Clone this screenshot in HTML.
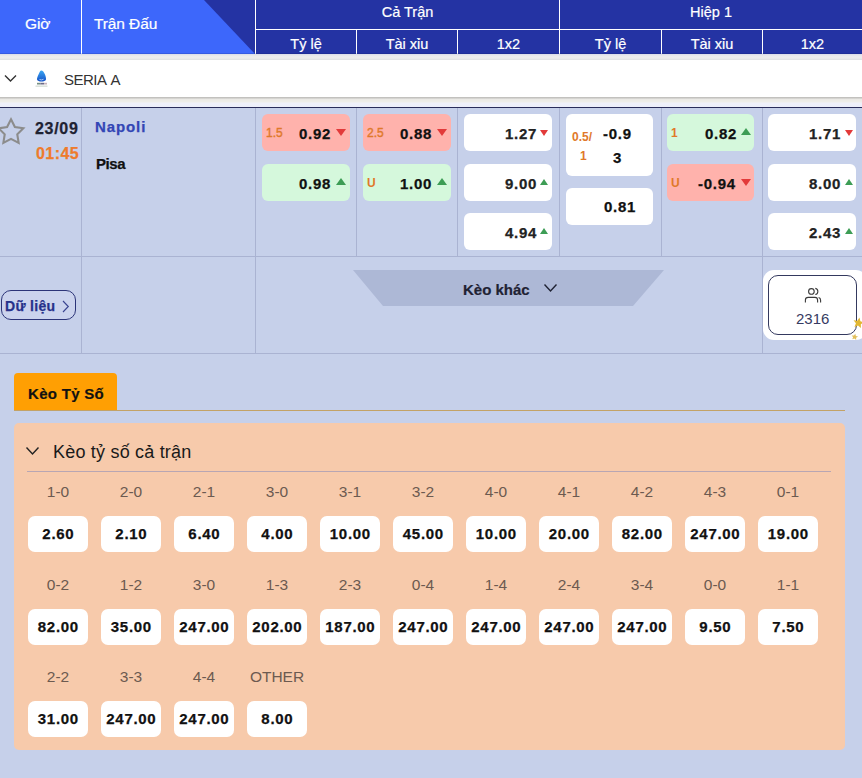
<!DOCTYPE html>
<html><head><meta charset="utf-8">
<style>
*{box-sizing:border-box;margin:0;padding:0}
html,body{width:862px;height:778px;overflow:hidden;background:#c6d0ea;font-family:"Liberation Sans",sans-serif;position:relative}
.a{position:absolute}
.hdr{left:0;top:0;width:862px;height:54px;background:#2433a3}
.hl{left:0;top:0;width:255px;height:54px;background:#3d67fb;clip-path:polygon(0 0,204px 0,255px 54px,0 54px)}
.wv{background:#fff;width:1px}
.wh{background:#fff;height:1px}
.ht{color:#fff;font-size:14.5px;line-height:16px;white-space:nowrap;text-align:center;-webkit-text-stroke:0.2px #fff}
.lg{left:0;top:54px;width:862px;height:6px;background:linear-gradient(#d9dbe9 0,#ebebec 2px,#ececec 4px,#dfe0e1 6px)}
.lrow{left:0;top:60px;width:862px;height:37px;background:#fff}
.shadow{left:0;top:97px;width:862px;height:10px;background:linear-gradient(#c2c1be 0,#c2c1be 1px,#e9e8e4 2px,#efeee9 5px,#eff0fa 6px,#eceefa 10px)}
.navy{left:0;top:107px;width:862px;height:1px;background:#292c5a}
.bv{background:#aab3d2;width:1px}
.bh{background:#aab3d2;height:1px}
.box{width:88px;height:37px;border-radius:6px;background:#fff}
.red{background:#ffb2ac}
.grn{background:#d5f8dc}
.num{font-weight:bold;font-size:15px;color:#111;letter-spacing:0.75px;white-space:nowrap;line-height:16px;-webkit-text-stroke:0.25px currentColor}
.lbl{font-weight:bold;font-size:12px;color:#e0792a;white-space:nowrap;line-height:14px}
.lbn{font-weight:normal;-webkit-text-stroke:0.4px #e0792a}
.up{width:0;height:0;border-left:5px solid transparent;border-right:5px solid transparent;border-bottom:7px solid #3d9d55}
.dn{width:0;height:0;border-left:5px solid transparent;border-right:5px solid transparent;border-top:7px solid #e23a3a}
.ups{width:0;height:0;border-left:4px solid transparent;border-right:4px solid transparent;border-bottom:6px solid #3d9d55}
.dns{width:0;height:0;border-left:4px solid transparent;border-right:4px solid transparent;border-top:6px solid #e23a3a}
.sl{font-size:15.5px;color:#6c5a50;text-align:center;width:60px;line-height:16px;white-space:nowrap}
.sb{width:60px;height:36px;border-radius:7px;background:#fff;font-weight:bold;font-size:15px;letter-spacing:0.7px;text-indent:0.7px;color:#111;text-align:center;line-height:36px;white-space:nowrap;-webkit-text-stroke:0.25px currentColor}
</style></head><body>
<!-- header -->
<div class="a hdr"></div>
<div class="a hl"></div>
<div class="a wv" style="left:81px;top:0;height:54px"></div>
<div class="a wv" style="left:255px;top:0;height:54px"></div>
<div class="a wh" style="left:255px;top:29px;width:607px"></div>
<div class="a wv" style="left:356px;top:29px;height:25px"></div>
<div class="a wv" style="left:457px;top:29px;height:25px"></div>
<div class="a wv" style="left:559px;top:0;height:54px"></div>
<div class="a wv" style="left:661px;top:29px;height:25px"></div>
<div class="a wv" style="left:762px;top:29px;height:25px"></div>
<div class="a ht" style="left:25px;top:16px;font-size:15.5px;letter-spacing:-0.1px">Giờ</div>
<div class="a ht" style="left:94px;top:16px;font-size:15.5px;letter-spacing:-0.1px">Trận Đấu</div>
<div class="a ht" style="left:256px;top:4px;width:303px">Cả Trận</div>
<div class="a ht" style="left:560px;top:4px;width:302px">Hiệp 1</div>
<div class="a ht" style="left:256px;top:36px;width:100px">Tỷ lệ</div>
<div class="a ht" style="left:357px;top:36px;width:100px">Tài xỉu</div>
<div class="a ht" style="left:458px;top:36px;width:101px">1x2</div>
<div class="a ht" style="left:560px;top:36px;width:101px">Tỷ lệ</div>
<div class="a ht" style="left:662px;top:36px;width:100px">Tài xỉu</div>
<div class="a ht" style="left:763px;top:36px;width:99px">1x2</div>

<div class="a" style="left:0;top:53px;width:862px;height:1px;background:rgba(10,20,90,0.15)"></div>
<!-- league row -->
<div class="a lg"></div>
<div class="a lrow"></div>
<svg class="a" style="left:4px;top:74px" width="13" height="9" viewBox="0 0 13 9"><path d="M1 1.5 L6.5 7 L12 1.5" fill="none" stroke="#333" stroke-width="1.4"/></svg>
<svg class="a" style="left:32px;top:68px" width="18" height="22" viewBox="32 68 18 22"><defs><linearGradient id="lg1" x1="0" y1="0" x2="0" y2="1"><stop offset="0" stop-color="#3aa6f2"/><stop offset="1" stop-color="#1652c8"/></linearGradient></defs><path d="M41 70.5 C42.5 70.3 44 72 45 74.5 C46 77 46.2 78.8 46 79.6 C45.6 81 43.5 81.6 41.5 81.6 C39.3 81.6 37.4 81 37 79.6 C36.8 78.6 37.5 76.5 38.5 74.5 C39.3 72.8 40 71 41 70.5Z" fill="url(#lg1)"/><path d="M39.5 79.5 Q41.5 80.5 43.5 79.3" stroke="#cfe6ff" stroke-width="0.8" fill="none"/><rect x="37" y="82.8" width="3.5" height="1.7" fill="#4a6a5a" opacity="0.75"/><rect x="40.5" y="82.8" width="3.5" height="1.7" fill="#3a3a60" opacity="0.75"/><rect x="44" y="82.8" width="3" height="1.7" fill="#a08090" opacity="0.6"/><rect x="35.5" y="85.5" width="12" height="1.3" fill="#b9c6b9" opacity="0.6"/></svg>
<div class="a" style="left:64px;top:71px;font-size:15px;color:#333;line-height:17px;letter-spacing:-0.5px;word-spacing:2px">SERIA A</div>
<div class="a shadow"></div>
<div class="a navy"></div>

<!-- body grid lines -->
<div class="a bv" style="left:81px;top:108px;height:246px"></div>
<div class="a bv" style="left:255px;top:108px;height:246px"></div>
<div class="a bv" style="left:356px;top:108px;height:148px"></div>
<div class="a bv" style="left:457px;top:108px;height:148px"></div>
<div class="a bv" style="left:559px;top:108px;height:148px"></div>
<div class="a bv" style="left:661px;top:108px;height:148px"></div>
<div class="a bv" style="left:762px;top:108px;height:246px"></div>
<div class="a bh" style="left:0;top:256px;width:862px"></div>
<div class="a bh" style="left:0;top:353px;width:862px"></div>

<!-- match info -->
<svg class="a" style="left:0;top:108px" width="30" height="40" viewBox="0 108 30 40"><path d="M11.00 119.30 L14.88 126.96 L23.36 128.28 L17.28 134.34 L18.64 142.82 L11.00 138.90 L3.36 142.82 L4.72 134.34 L-1.36 128.28 L7.12 126.96Z" fill="none" stroke="#8c8c8c" stroke-width="2.1" stroke-linejoin="miter"/></svg>
<div class="a num" style="left:35px;top:121px;color:#1e2233;letter-spacing:0.7px;font-size:16px">23/09</div>
<div class="a num" style="left:36px;top:146px;color:#ee7b2c;letter-spacing:0.45px;font-size:16px">01:45</div>
<div class="a num" style="left:95px;top:119px;color:#3346b5;letter-spacing:0.9px">Napoli</div>
<div class="a num" style="left:96px;top:156px;color:#111;letter-spacing:-0.4px">Pisa</div>

<!-- odds col1 Tỷ lệ -->
<div class="a box red" style="left:262px;top:114px"></div>
<div class="a lbl lbn" style="left:266px;top:126px">1.5</div>
<div class="a num" style="left:299px;top:126px">0.92</div>
<div class="a dn" style="left:336px;top:129px"></div>
<div class="a box grn" style="left:262px;top:164px"></div>
<div class="a num" style="left:299px;top:176px">0.98</div>
<div class="a up" style="left:336px;top:178px"></div>

<!-- col2 Tài xỉu -->
<div class="a box red" style="left:363px;top:114px"></div>
<div class="a lbl lbn" style="left:367px;top:126px">2.5</div>
<div class="a num" style="left:400px;top:126px">0.88</div>
<div class="a dn" style="left:437px;top:129px"></div>
<div class="a box grn" style="left:363px;top:164px"></div>
<div class="a lbl" style="left:367px;top:176px">U</div>
<div class="a num" style="left:400px;top:176px">1.00</div>
<div class="a up" style="left:437px;top:178px"></div>

<!-- col3 1x2 -->
<div class="a box" style="left:464px;top:114px"></div>
<div class="a num" style="left:505px;top:126px;color:#222">1.27</div>
<div class="a dns" style="left:540px;top:130px"></div>
<div class="a box" style="left:464px;top:164px"></div>
<div class="a num" style="left:505px;top:176px;color:#222">9.00</div>
<div class="a ups" style="left:540px;top:179px"></div>
<div class="a box" style="left:464px;top:213px"></div>
<div class="a num" style="left:505px;top:225px;color:#222">4.94</div>
<div class="a ups" style="left:540px;top:228px"></div>

<!-- col4 Tỷ lệ H1 -->
<div class="a box" style="left:566px;top:114px;height:62px;width:87px"></div>
<div class="a lbl" style="left:572px;top:130px">0.5/</div>
<div class="a lbl" style="left:580px;top:149px">1</div>
<div class="a num" style="left:603px;top:126px">-0.9</div>
<div class="a num" style="left:613px;top:150px">3</div>
<div class="a box" style="left:566px;top:188px;width:87px"></div>
<div class="a num" style="left:604px;top:199px">0.81</div>

<!-- col5 Tài xỉu H1 -->
<div class="a box grn" style="left:667px;top:114px;width:87px"></div>
<div class="a lbl" style="left:671px;top:126px">1</div>
<div class="a num" style="left:705px;top:126px">0.82</div>
<div class="a up" style="left:741px;top:128px"></div>
<div class="a box red" style="left:667px;top:164px;width:87px"></div>
<div class="a lbl" style="left:671px;top:176px">U</div>
<div class="a num" style="left:698px;top:176px">-0.94</div>
<div class="a dn" style="left:741px;top:179px"></div>

<!-- col6 1x2 H1 -->
<div class="a box" style="left:768px;top:114px"></div>
<div class="a num" style="left:809px;top:126px;color:#222">1.71</div>
<div class="a dns" style="left:845px;top:130px"></div>
<div class="a box" style="left:768px;top:164px"></div>
<div class="a num" style="left:809px;top:176px;color:#222">8.00</div>
<div class="a ups" style="left:845px;top:179px"></div>
<div class="a box" style="left:768px;top:213px"></div>
<div class="a num" style="left:809px;top:225px;color:#222">2.43</div>
<div class="a ups" style="left:845px;top:228px"></div>

<!-- second row -->
<div class="a" style="left:1px;top:290px;width:75px;height:30px;border:1.6px solid #2c3478;border-radius:10px;background:#cbd3ed"></div>
<div class="a" style="left:5px;top:298px;font-weight:bold;font-size:14px;color:#26318a;line-height:16px;letter-spacing:0.3px;-webkit-text-stroke:0.25px currentColor">Dữ liệu</div>
<svg class="a" style="left:61px;top:299px" width="9" height="15" viewBox="0 0 9 15"><path d="M2 2 L7.3 7.5 L2 13" fill="none" stroke="#3a4490" stroke-width="1.15"/></svg>

<div class="a" style="left:353px;top:270px;width:311px;height:36px;background:#adb8d6;clip-path:polygon(0 0,311px 0,280px 36px,30px 36px)"></div>
<div class="a" style="left:463px;top:281px;font-weight:bold;font-size:15px;color:#1f2233;line-height:17px;-webkit-text-stroke:0.2px #1f2233">Kèo khác</div>
<svg class="a" style="left:543px;top:283px" width="15" height="10" viewBox="0 0 15 10"><path d="M1.5 1.5 L7.5 8 L13.5 1.5" fill="none" stroke="#1f2233" stroke-width="1.4"/></svg>

<div class="a" style="left:763px;top:270px;width:104px;height:70px;background:#fff;border-radius:11px"></div>
<div class="a" style="left:768px;top:275px;width:89px;height:60px;border:1.5px solid #34395e;border-radius:10px"></div>
<svg class="a" style="left:800px;top:284px" width="26" height="22" viewBox="800 284 26 22"><circle cx="811.4" cy="291.4" r="2.8" fill="none" stroke="#3a3a3a" stroke-width="1.1"/><path d="M815.3 288.4 A3.1 3.1 0 0 1 815.3 294.5" fill="none" stroke="#3a3a3a" stroke-width="1.1"/><path d="M805.4 302.6 L805.4 300 Q805.4 297.4 808.2 297.4 L815 297.4 Q817.6 297.4 817.6 300.2 L817.6 302.4" fill="none" stroke="#3a3a3a" stroke-width="1.1"/><path d="M818.6 297.5 Q820.6 298 820.6 300.2 L820.6 302.6" fill="none" stroke="#3a3a3a" stroke-width="1.1"/></svg>
<div class="a" style="left:796px;top:310px;font-size:15px;color:#363b62;line-height:17px">2316</div>
<svg class="a" style="left:845px;top:312px" width="17" height="32" viewBox="845 312 17 32"><path d="M859.47 317.49 L860.37 321.19 L864.05 322.22 L860.80 324.22 L860.95 328.03 L858.05 325.56 L854.47 326.89 L855.93 323.36 L853.56 320.37 L857.36 320.66Z" fill="#e2b732"/><path d="M855.29 333.65 L855.85 335.89 L858.07 336.53 L856.11 337.75 L856.19 340.06 L854.42 338.58 L852.25 339.36 L853.12 337.22 L851.70 335.40 L854.00 335.56Z" fill="#dcb440" opacity="0.85"/></svg>

<!-- tab -->
<div class="a" style="left:14px;top:373px;width:103px;height:38px;background:#ff9f03;border-radius:4px 4px 0 0"></div>
<div class="a" style="left:28px;top:385px;font-weight:bold;font-size:15px;color:#111;line-height:17px;letter-spacing:0.3px;-webkit-text-stroke:0.2px #111">Kèo Tỷ Số</div>
<div class="a" style="left:14px;top:410px;width:831px;height:1px;background:#c3a266"></div>

<!-- panel -->
<div class="a" style="left:14px;top:423px;width:831px;height:327px;background:#f7caab;border-radius:5px"></div>
<svg class="a" style="left:25px;top:446px" width="15" height="10" viewBox="0 0 15 10"><path d="M1.5 1.5 L7.5 8 L13.5 1.5" fill="none" stroke="#222" stroke-width="1.4"/></svg>
<div class="a" style="left:53px;top:442px;font-size:18px;color:#1a1a1a;line-height:20px;letter-spacing:0.2px">Kèo tỷ số cả trận</div>
<div class="a" style="left:27px;top:471px;width:804px;height:1px;background:#b8a6b3"></div>

<div class="a sl" style="left:28px;top:484px">1-0</div>
<div class="a sb" style="left:28px;top:516px">2.60</div>
<div class="a sl" style="left:101px;top:484px">2-0</div>
<div class="a sb" style="left:101px;top:516px">2.10</div>
<div class="a sl" style="left:174px;top:484px">2-1</div>
<div class="a sb" style="left:174px;top:516px">6.40</div>
<div class="a sl" style="left:247px;top:484px">3-0</div>
<div class="a sb" style="left:247px;top:516px">4.00</div>
<div class="a sl" style="left:320px;top:484px">3-1</div>
<div class="a sb" style="left:320px;top:516px">10.00</div>
<div class="a sl" style="left:393px;top:484px">3-2</div>
<div class="a sb" style="left:393px;top:516px">45.00</div>
<div class="a sl" style="left:466px;top:484px">4-0</div>
<div class="a sb" style="left:466px;top:516px">10.00</div>
<div class="a sl" style="left:539px;top:484px">4-1</div>
<div class="a sb" style="left:539px;top:516px">20.00</div>
<div class="a sl" style="left:612px;top:484px">4-2</div>
<div class="a sb" style="left:612px;top:516px">82.00</div>
<div class="a sl" style="left:685px;top:484px">4-3</div>
<div class="a sb" style="left:685px;top:516px">247.00</div>
<div class="a sl" style="left:758px;top:484px">0-1</div>
<div class="a sb" style="left:758px;top:516px">19.00</div>
<div class="a sl" style="left:28px;top:577px">0-2</div>
<div class="a sb" style="left:28px;top:609px">82.00</div>
<div class="a sl" style="left:101px;top:577px">1-2</div>
<div class="a sb" style="left:101px;top:609px">35.00</div>
<div class="a sl" style="left:174px;top:577px">3-0</div>
<div class="a sb" style="left:174px;top:609px">247.00</div>
<div class="a sl" style="left:247px;top:577px">1-3</div>
<div class="a sb" style="left:247px;top:609px">202.00</div>
<div class="a sl" style="left:320px;top:577px">2-3</div>
<div class="a sb" style="left:320px;top:609px">187.00</div>
<div class="a sl" style="left:393px;top:577px">0-4</div>
<div class="a sb" style="left:393px;top:609px">247.00</div>
<div class="a sl" style="left:466px;top:577px">1-4</div>
<div class="a sb" style="left:466px;top:609px">247.00</div>
<div class="a sl" style="left:539px;top:577px">2-4</div>
<div class="a sb" style="left:539px;top:609px">247.00</div>
<div class="a sl" style="left:612px;top:577px">3-4</div>
<div class="a sb" style="left:612px;top:609px">247.00</div>
<div class="a sl" style="left:685px;top:577px">0-0</div>
<div class="a sb" style="left:685px;top:609px">9.50</div>
<div class="a sl" style="left:758px;top:577px">1-1</div>
<div class="a sb" style="left:758px;top:609px">7.50</div>
<div class="a sl" style="left:28px;top:669px">2-2</div>
<div class="a sb" style="left:28px;top:701px">31.00</div>
<div class="a sl" style="left:101px;top:669px">3-3</div>
<div class="a sb" style="left:101px;top:701px">247.00</div>
<div class="a sl" style="left:174px;top:669px">4-4</div>
<div class="a sb" style="left:174px;top:701px">247.00</div>
<div class="a sl" style="left:247px;top:669px">OTHER</div>
<div class="a sb" style="left:247px;top:701px">8.00</div>
</body></html>
